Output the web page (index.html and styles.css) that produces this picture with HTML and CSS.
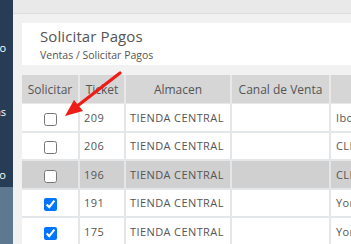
FILE: index.html
```html
<!DOCTYPE html>
<html lang="es">
<head>
<meta charset="utf-8">
<link rel="stylesheet" href="styles.css">
</head>
<body>
<div class="app">
  <nav class="sidebar">
    <div class="nav-top">
      <span class="nav-item nav-1">Inicio</span>
      <span class="nav-item nav-2">Ventas</span>
      <span class="nav-item nav-3">Pago</span>
    </div>
    <div class="nav-sub"></div>
  </nav>
  <div class="main">
    <header class="topbar"></header>
    <div class="content">
      <section class="card">
        <h1 class="title">Solicitar Pagos</h1>
        <div class="crumbs">Ventas / Solicitar Pagos</div>
      </section>
      <table class="grid">
        <colgroup>
          <col class="c1"><col class="c2"><col class="c3"><col class="c4"><col class="c5">
        </colgroup>
        <thead>
          <tr><th>Solicitar</th><th>Ticket</th><th>Almacen</th><th>Canal de Venta</th><th>Cliente</th></tr>
        </thead>
        <tbody>
          <tr><td class="chk"><input type="checkbox"></td><td>209</td><td>TIENDA CENTRAL</td><td></td><td>Ibooking</td></tr>
          <tr><td class="chk"><input type="checkbox"></td><td>206</td><td>TIENDA CENTRAL</td><td></td><td>CLIENTE</td></tr>
          <tr class="hl"><td class="chk"><input type="checkbox"></td><td>196</td><td>TIENDA CENTRAL</td><td></td><td>CLIENTE</td></tr>
          <tr><td class="chk"><input type="checkbox" checked></td><td>191</td><td>TIENDA CENTRAL</td><td></td><td>Yoronda</td></tr>
          <tr><td class="chk"><input type="checkbox" checked></td><td>175</td><td>TIENDA CENTRAL</td><td></td><td>Yoronda</td></tr>
        </tbody>
      </table>
    </div>
  </div>
</div>
<svg class="annot" width="351" height="244" viewBox="0 0 351 244">
  <line x1="120" y1="73" x2="76" y2="107" stroke="#ee1c16" stroke-width="3.2" stroke-linecap="round"/>
  <polygon points="65,116 74,100 83,111" fill="#ee1c16"/>
</svg>
</body>
</html>
```
FILE: styles.css
```css
* { box-sizing: border-box; }
html, body { margin: 0; padding: 0; }
body {
  width: 351px;
  height: 244px;
  overflow: hidden;
  background: #f1f1f1;
  font-family: "Open Sans", "Liberation Sans", sans-serif;
  color: #555;
  position: relative;
}
.app { display: flex; height: 244px; }
.sidebar {
  width: 13px;
  flex: none;
  display: flex;
  flex-direction: column;
  overflow: hidden;
}
.nav-top {
  height: 187px;
  background: #263d55;
  display: flex;
  flex-direction: column;
  align-items: flex-end;
  padding-right: 7px;
}
.nav-item {
  color: #fff;
  font-size: 11px;
  line-height: 14px;
  white-space: nowrap;
}
.nav-1 { margin-top: 41px; }
.nav-2 { margin-top: 50px; }
.nav-3 { margin-top: 49px; }
.nav-sub { flex: 1; background: #5e7890; }
.main { flex: 1; min-width: 0; display: flex; flex-direction: column; }
.topbar {
  height: 14px;
  flex: none;
  background: #e9e9e9;
  border-bottom: 1px solid #dedede;
}
.content {
  padding: 9px 0 0 9px;
  display: flex;
  flex-direction: column;
  gap: 10px;
}
.card {
  background: #fff;
  height: 42px;
  padding: 3px 0 0 18px;
  white-space: nowrap;
}
.title {
  margin: 0;
  font-size: 15px;
  font-weight: 400;
  line-height: 20px;
  letter-spacing: 0.1px;
  color: #555;
}
.crumbs {
  font-size: 10.5px;
  line-height: 14px;
  margin-top: 2px;
  color: #555;
}
.grid {
  border-collapse: separate;
  border-spacing: 0;
  table-layout: fixed;
  width: 420px;
}
.c1 { width: 58px; }
.c2 { width: 46px; }
.c3 { width: 106px; }
.c4 { width: 99px; }
.c5 { width: 111px; }
.grid th {
  background: #d6d6d6;
  font-weight: 400;
  font-size: 12px;
  height: 29px;
  text-align: center;
  border-right: 2px solid #e8e8e8;
  border-bottom: 1px solid #e8e8e8;
  padding: 0 2px;
  white-space: nowrap;
  overflow: hidden;
}
.grid td {
  background: #fff;
  font-size: 11px;
  letter-spacing: 0.4px;
  height: 28.5px;
  padding: 0 4px 0 4px;
  border-right: 2px solid #e4e7ea;
  border-bottom: 2px solid #e4e7ea;
  white-space: nowrap;
  overflow: hidden;
}
.grid td:nth-child(5) { padding-left: 5px; }
.grid tr.hl td { background: #d0d0d0; }
.grid td.chk { text-align: center; padding: 0; }
.chk input { margin: 2px 0 0 0; width: 13px; height: 13px; vertical-align: middle; }
.annot { position: absolute; left: 0; top: 0; pointer-events: none; }
```
